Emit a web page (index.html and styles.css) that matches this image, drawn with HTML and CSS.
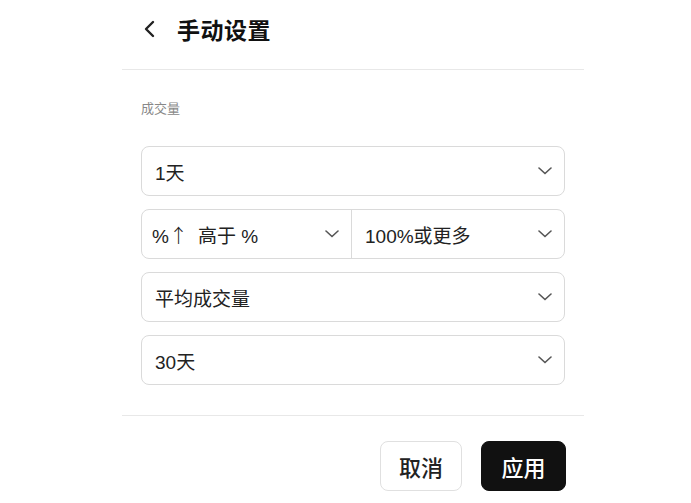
FILE: index.html
```html
<!DOCTYPE html>
<html lang="zh-CN">
<head>
    <meta charset="UTF-8">
    <title>手动设置</title>
    <link rel="stylesheet" href="styles.css">
</head>
<body>
    <div class="panel">
        <div class="header">
            <svg class="back" width="14" height="18" viewBox="0 0 14 18">
                <path d="M11 2 L4 9 L11 16" fill="none" stroke="#222" stroke-width="2.4" stroke-linecap="round" stroke-linejoin="round"/>
            </svg>
            <h1 class="title">手动设置</h1>
        </div>

        <div class="body">
            <div class="label">成交量</div>

            <div class="select">
                <span>1天</span>
                <svg class="chev" width="14" height="8" viewBox="0 0 14 8"><path d="M1 1 L7 6.5 L13 1" fill="none" stroke="#555" stroke-width="1.6" stroke-linecap="round"/></svg>
            </div>

            <div class="select-group">
                <div class="cell">
                    <span><span class="pct">%<span class="arrow">↑</span></span>高于 %</span>
                    <svg class="chev" width="14" height="8" viewBox="0 0 14 8"><path d="M1 1 L7 6.5 L13 1" fill="none" stroke="#555" stroke-width="1.6" stroke-linecap="round"/></svg>
                </div>
                <div class="cell">
                    <span>100%或更多</span>
                    <svg class="chev" width="14" height="8" viewBox="0 0 14 8"><path d="M1 1 L7 6.5 L13 1" fill="none" stroke="#555" stroke-width="1.6" stroke-linecap="round"/></svg>
                </div>
            </div>

            <div class="select">
                <span>平均成交量</span>
                <svg class="chev" width="14" height="8" viewBox="0 0 14 8"><path d="M1 1 L7 6.5 L13 1" fill="none" stroke="#555" stroke-width="1.6" stroke-linecap="round"/></svg>
            </div>

            <div class="select">
                <span>30天</span>
                <svg class="chev" width="14" height="8" viewBox="0 0 14 8"><path d="M1 1 L7 6.5 L13 1" fill="none" stroke="#555" stroke-width="1.6" stroke-linecap="round"/></svg>
            </div>
        </div>

        <div class="footer">
            <button class="btn btn-cancel">取消</button>
            <button class="btn btn-apply">应用</button>
        </div>
    </div>
</body>
</html>
```

FILE: styles.css
```css
body {
    margin: 0;
    background: #fff;
    font-family: "Liberation Sans", "Noto Sans CJK SC", sans-serif;
    color: #222;
}
.panel {
    width: 462px;
    margin-left: 122px;
}
.header {
    height: 70px;
    box-sizing: border-box;
    padding: 0 0 12px 20px;
    display: flex;
    align-items: center;
    border-bottom: 1px solid #e8e8e8;
}
.back {
    display: block;
}
.title {
    margin: 0 0 0 21px;
    font-size: 23px;
    font-weight: bold;
    color: #111;
    letter-spacing: 0.5px;
}
.body {
    padding: 30px 19px 0;
    display: flex;
    flex-direction: column;
    gap: 13px;
}
.label {
    font-size: 13px;
    line-height: 18px;
    color: #888;
    margin-bottom: 15px;
}
.select, .select-group {
    height: 50px;
    box-sizing: border-box;
    border: 1px solid #dadada;
    border-radius: 8px;
    font-size: 19px;
    color: #222;
}
.select {
    display: flex;
    align-items: center;
    justify-content: space-between;
    padding: 0 12px 0 13px;
}
.select-group {
    display: flex;
}
.cell {
    flex: 1;
    display: flex;
    align-items: center;
    justify-content: space-between;
    padding: 0 12px 0 10px;
}
.cell + .cell {
    border-left: 1px solid #dadada;
    padding-left: 13px;
}
.pct {
    margin-right: 10px;
}
.arrow {
    font-family: "Noto Sans CJK SC", sans-serif;
    font-weight: 300;
}
.chev {
    display: block;
}
.footer {
    margin-top: 30px;
    border-top: 1px solid #e8e8e8;
    padding: 25px 18px 0 0;
    display: flex;
    justify-content: flex-end;
    gap: 19px;
}
.btn {
    height: 50px;
    border-radius: 8px;
    font-family: inherit;
    font-size: 22px;
    font-weight: 500;
    cursor: pointer;
}
.btn-cancel {
    width: 82px;
    background: #fff;
    border: 1px solid #e0e0e0;
    color: #222;
}
.btn-apply {
    width: 85px;
    background: #111;
    border: 1px solid #111;
    color: #fff;
}
```
